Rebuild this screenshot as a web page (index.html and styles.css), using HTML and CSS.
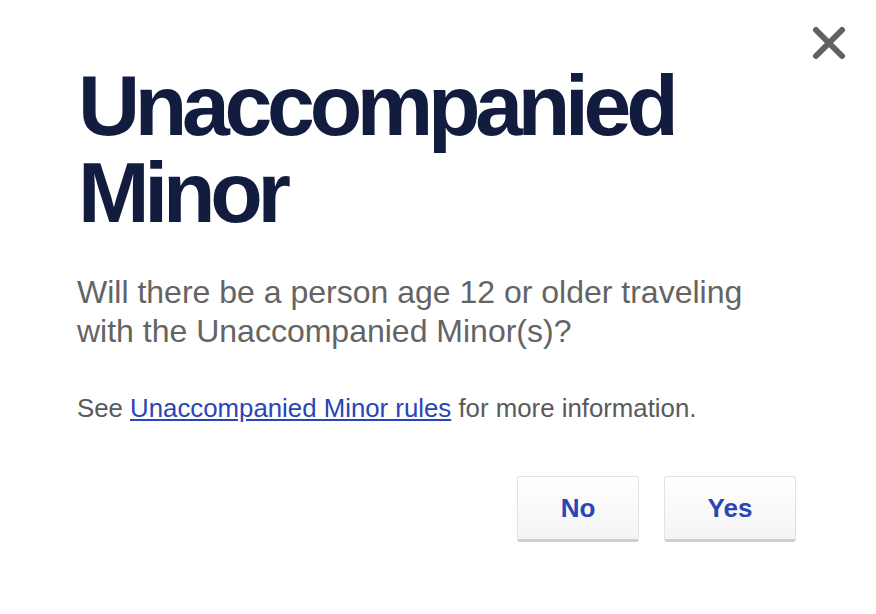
FILE: index.html
```html
<!DOCTYPE html>
<html lang="en">
<head>
    <meta charset="UTF-8">
    <meta name="viewport" content="width=device-width, initial-scale=1.0">
    <title>Unaccompanied Minor</title>
    <link rel="stylesheet" href="styles.css">
</head>
<body>

    <!-- Modal -->
    <div class="modal">
        <button class="close-btn" aria-label="Close">
            <svg width="36" height="36" viewBox="0 0 36 36">
                <path d="M5 5 L31 31 M31 5 L5 31" stroke="#616161" stroke-width="6" stroke-linecap="round"/>
            </svg>
        </button>

        <h1>Unaccompanied Minor</h1>

        <p class="question">Will there be a person age 12 or older traveling with the Unaccompanied Minor(s)?</p>

        <p class="info">See <a href="#">Unaccompanied Minor rules</a> for more information.</p>

        <div class="actions">
            <button class="btn btn-no">No</button>
            <button class="btn btn-yes">Yes</button>
        </div>
    </div>

</body>
</html>
```

FILE: styles.css
```css
/* Estilos gerais */
body {
    font-family: "Liberation Sans", Arial, sans-serif;
    background-color: #fff;
    margin: 0;
}

.modal {
    position: relative;
    padding: 62px 80px 0 77px;
}

.close-btn {
    position: absolute;
    top: 25px;
    right: 29px;
    background: none;
    border: none;
    padding: 0;
    cursor: pointer;
}

h1 {
    color: #121c3f;
    font-size: 86px;
    font-weight: bold;
    line-height: 87px;
    letter-spacing: -5.3px;
    margin: 0 0 0 1px;
    width: 620px;
}

.question {
    color: #646464;
    font-size: 32px;
    line-height: 38.5px;
    margin: 37px 0 0;
    width: 700px;
}

.info {
    color: #5a5a5a;
    font-size: 25.8px;
    margin: 44px 0 0;
}

.info a {
    color: #2a45b5;
}

.actions {
    display: flex;
    justify-content: flex-end;
    gap: 25px;
    margin-top: 53px;
}

.btn {
    font-family: "Liberation Sans", Arial, sans-serif;
    font-size: 26px;
    font-weight: bold;
    color: #2a45b5;
    height: 66px;
    background: linear-gradient(#fff, #f4f4f4);
    border: 1px solid #e2e2e2;
    border-bottom: 3px solid #cfcfcf;
    border-radius: 3px;
    cursor: pointer;
}

.btn-no {
    width: 122px;
}

.btn-yes {
    width: 132px;
}
```
